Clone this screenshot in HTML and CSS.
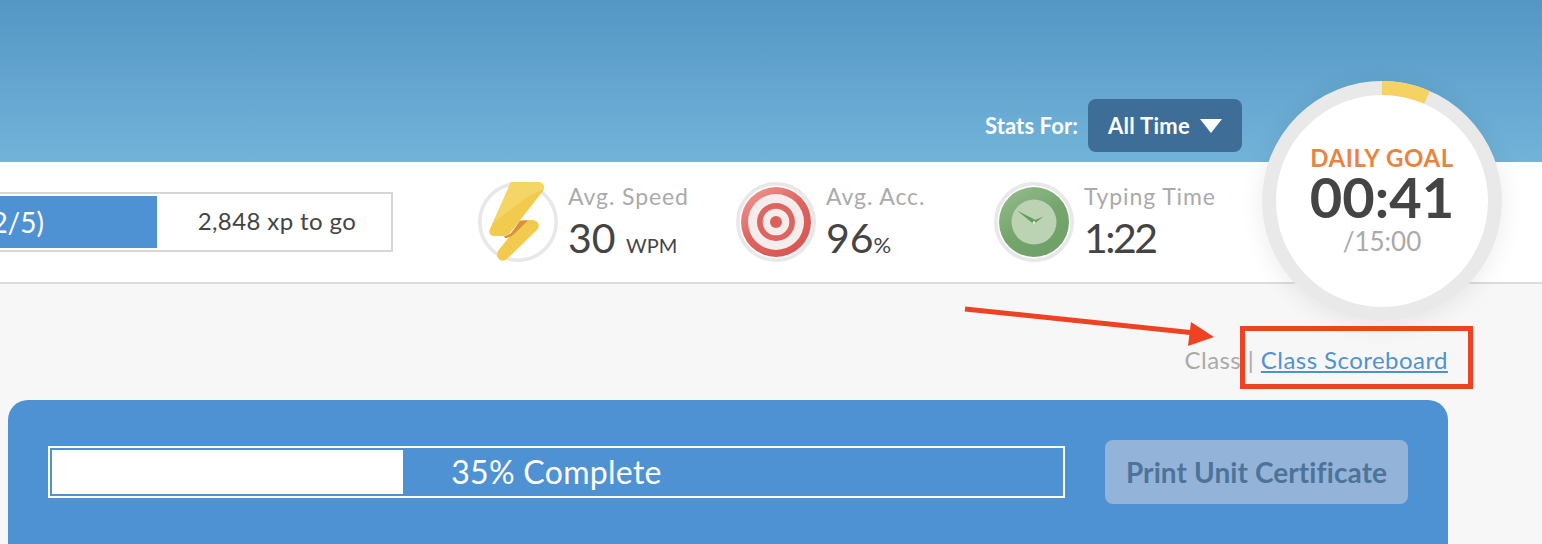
FILE: index.html
```html
<!DOCTYPE html>
<html lang="en">
<head>
  <meta charset="UTF-8" />
  <title>Typing Stats</title>
  <link rel="stylesheet" href="styles.css">
</head>
<body>
  <div class="page">
    <!-- Blue header with the stats filter -->
    <div class="top-banner">
      <span class="stats-label">Stats For:</span>
      <button class="stats-select" type="button">All Time <span class="caret"></span></button>
    </div>

    <!-- Stats row -->
    <div class="stats-bar">
      <div class="xp-bar">
        <div class="xp-fill">(2/5)</div>
        <div class="xp-left">2,848 xp to go</div>
      </div>

      <div class="stat">
        <svg class="stat-icon" viewBox="0 0 80 80">
          <circle cx="40" cy="40" r="38.2" fill="none" stroke="#e8e8e8" stroke-width="3.6"/>
          <path d="M45 38H55Q63 40 60 47L29 77Q23 81 20 76Q18 73 20 69Z" fill="#f2cb4e"/>
          <path d="M33 0H60Q68 1 65 9L32 51Q29 54 25 54H15Q10 53 12 47Z" fill="#f2cb4e"/>
          <path d="M33 0H60Q67 1 66 7Q50 13 40 22Q28 31 16 40Z" fill="#f5d566"/>
          <path d="M42 38.5H50L36 52Q32 56 27 56L26 54Q33 53 36 47Z" fill="#d8913c"/>
        </svg>
        <div class="stat-text">
          <div class="stat-label">Avg. Speed</div>
          <div class="stat-value">30 <small class="unit">WPM</small></div>
        </div>
      </div>

      <div class="stat">
        <svg class="stat-icon" viewBox="0 0 80 80">
          <defs>
            <linearGradient id="targetRed" x1="0.15" y1="0" x2="0.85" y2="1">
              <stop offset="0" stop-color="#ee9693"/>
              <stop offset="0.5" stop-color="#de625e"/>
              <stop offset="1" stop-color="#d9544f"/>
            </linearGradient>
          </defs>
          <circle cx="40" cy="40" r="38.2" fill="#fff" stroke="#e8e8e8" stroke-width="3.6"/>
          <circle cx="40" cy="40" r="35" fill="url(#targetRed)"/>
          <circle cx="40" cy="40" r="28" fill="#f5ecec"/>
          <circle cx="40" cy="40" r="19" fill="#dd6460"/>
          <circle cx="40" cy="40" r="13.3" fill="#f5ecec"/>
          <circle cx="40" cy="40" r="6" fill="#dd5f5b"/>
        </svg>
        <div class="stat-text">
          <div class="stat-label">Avg. Acc.</div>
          <div class="stat-value">96<small class="percent">%</small></div>
        </div>
      </div>

      <div class="stat">
        <svg class="stat-icon" viewBox="0 0 80 80">
          <defs>
            <linearGradient id="clockGreen" x1="0.2" y1="0" x2="0.8" y2="1">
              <stop offset="0" stop-color="#93ba8b"/>
              <stop offset="0.5" stop-color="#74a56c"/>
              <stop offset="1" stop-color="#6fa067"/>
            </linearGradient>
          </defs>
          <circle cx="40" cy="40" r="38.2" fill="#fff" stroke="#e8e8e8" stroke-width="3.6"/>
          <circle cx="40" cy="40" r="35" fill="url(#clockGreen)"/>
          <circle cx="40" cy="40" r="22.5" fill="#bbd3b3"/>
          <path d="M23 28.5L41.5 38L39 41.5Z" fill="#679a5f"/>
          <path d="M49.5 34.5L41 38L40.5 41.5Z" fill="#679a5f"/>
          <circle cx="40" cy="40.5" r="1.3" fill="#e6efe3"/>
        </svg>
        <div class="stat-text">
          <div class="stat-label">Typing Time</div>
          <div class="stat-value time-value">1:22</div>
        </div>
      </div>
    </div>

    <!-- Main content -->
    <div class="content">
      <div class="class-links">Class | <a href="#">Class Scoreboard</a></div>
      <div class="unit-card">
        <div class="unit-progress">
          <div class="unit-fill"></div>
          <div class="unit-text">35% Complete</div>
        </div>
        <button class="print-btn" type="button">Print Unit Certificate</button>
      </div>
    </div>

    <!-- Daily goal dial sits over the header and the stats row -->
    <div class="daily-goal">
      <svg class="goal-ring" viewBox="0 0 240 240">
        <circle cx="120" cy="120" r="113" fill="#fff" stroke="#e9e9e9" stroke-width="14"/>
        <path d="M120 7A113 113 0 0 1 165 16.4" fill="none" stroke="#f6d264" stroke-width="14"/>
      </svg>
      <div class="goal-title">DAILY GOAL</div>
      <div class="goal-time">00:41</div>
      <div class="goal-total">/15:00</div>
    </div>

    <!-- Red annotation drawn on top of the screenshot -->
    <svg class="annotation" viewBox="0 0 1542 544">
      <path d="M965 309L1195 333" fill="none" stroke="#ee4323" stroke-width="5"/>
      <path d="M1191 322L1214 337L1188 346Z" fill="#ee4323"/>
      <rect x="1242.5" y="328.5" width="228" height="58" fill="none" stroke="#ee4323" stroke-width="5"/>
    </svg>
  </div>
</body>
</html>
```

FILE: styles.css
```css
body {
  margin: 0;
  font-family: "Lato", "Open Sans", sans-serif;
  background: #f7f7f7;
  color: #444;
}

.page {
  position: relative;
  width: 1542px;
  height: 544px;
  overflow: hidden;
}

.top-banner {
  height: 162px;
  box-sizing: border-box;
  display: flex;
  align-items: flex-end;
  justify-content: flex-end;
  padding: 0 300px 10px 0;
  background: linear-gradient(#5497c5, #72b3d9);
}

.stats-label {
  align-self: flex-end;
  line-height: 53px;
  margin-right: 10px;
  color: #fff;
  font-size: 22px;
  font-weight: 700;
  letter-spacing: 0.1px;
}

.stats-select {
  width: 154px;
  height: 53px;
  display: flex;
  align-items: center;
  justify-content: center;
  gap: 10px;
  border: none;
  border-radius: 8px;
  background: #3e6d98;
  color: #fff;
  font-family: inherit;
  font-size: 22px;
  font-weight: 700;
  letter-spacing: 0.3px;
}

.caret {
  width: 0;
  height: 0;
  border-left: 11px solid transparent;
  border-right: 11px solid transparent;
  border-top: 14px solid #fff;
}

.stats-bar {
  height: 122px;
  box-sizing: border-box;
  display: flex;
  align-items: center;
  background: #fff;
  border-bottom: 2px solid #dcdcdc;
}

.xp-bar {
  width: 593px;
  height: 60px;
  box-sizing: border-box;
  flex-shrink: 0;
  display: flex;
  margin-left: -200px;
  padding: 2px;
  border: 2px solid #d6d6d6;
}

.xp-fill {
  width: 353px;
  box-sizing: border-box;
  padding-right: 113px;
  background: #4f92d4;
  color: #fff;
  font-size: 28px;
  line-height: 52px;
  text-align: right;
}

.xp-left {
  flex: 1;
  padding-left: 8px;
  font-size: 24px;
  letter-spacing: 0.4px;
  line-height: 50px;
  text-align: center;
}

.stat {
  width: 258px;
  flex-shrink: 0;
  display: flex;
  align-items: center;
  gap: 10px;
}

.xp-bar + .stat {
  margin-left: 85px;
}

.stat-icon {
  width: 80px;
  height: 80px;
  flex-shrink: 0;
}

.stat-label {
  margin-bottom: 3px;
  color: #aaa;
  font-size: 23px;
  letter-spacing: 0.9px;
  line-height: 28px;
}

.stat-value {
  height: 50px;
  font-size: 41px;
  line-height: 50px;
}

.time-value {
  letter-spacing: -2.5px;
}

.unit {
  font-size: 20px;
}

.percent {
  font-size: 22px;
}

.content {
  padding: 0 94px 0 8px;
}

.class-links {
  height: 116px;
  box-sizing: border-box;
  padding-top: 63px;
  color: #aaa;
  font-size: 24px;
  letter-spacing: 0.45px;
  line-height: 26px;
  text-align: right;
}

.class-links a {
  color: #4f92d4;
}

.unit-card {
  height: 200px;
  box-sizing: border-box;
  display: flex;
  align-items: flex-start;
  gap: 40px;
  padding: 40px;
  border-radius: 20px;
  background: #4f92d4;
}

.unit-progress {
  flex: 1;
  height: 52px;
  box-sizing: border-box;
  position: relative;
  display: flex;
  align-items: center;
  justify-content: center;
  margin-top: 6px;
  padding: 2px;
  border: 2px solid #fff;
}

.unit-fill {
  position: absolute;
  left: 2px;
  top: 2px;
  bottom: 2px;
  width: 351px;
  background: #fff;
}

.unit-text {
  margin-bottom: 2px;
  color: #fff;
  font-size: 32px;
  letter-spacing: 0.3px;
}

.print-btn {
  width: 303px;
  height: 64px;
  border: none;
  border-radius: 8px;
  background: #93b4d8;
  color: #4e7399;
  font-family: inherit;
  font-size: 28px;
  font-weight: 700;
  letter-spacing: 0.1px;
}

.daily-goal {
  position: absolute;
  left: 1262px;
  top: 81px;
  width: 240px;
  height: 240px;
  display: flex;
  flex-direction: column;
  align-items: center;
  padding-top: 64px;
  box-sizing: border-box;
  border-radius: 50%;
  box-shadow: 0 4px 24px rgba(0, 0, 0, 0.08);
}

.goal-ring {
  position: absolute;
  left: 0;
  top: 0;
  width: 240px;
  height: 240px;
}

.goal-title,
.goal-time,
.goal-total {
  position: relative;
}

.goal-title {
  color: #e8843f;
  font-size: 24px;
  font-weight: 700;
  letter-spacing: 0.6px;
  line-height: 25px;
}

.goal-time {
  margin-bottom: 2px;
  font-size: 56px;
  font-weight: 700;
  line-height: 54px;
}

.goal-total {
  color: #aaa;
  font-size: 26px;
  line-height: 30px;
}

.annotation {
  position: absolute;
  left: 0;
  top: 0;
  width: 1542px;
  height: 544px;
  pointer-events: none;
}
```
